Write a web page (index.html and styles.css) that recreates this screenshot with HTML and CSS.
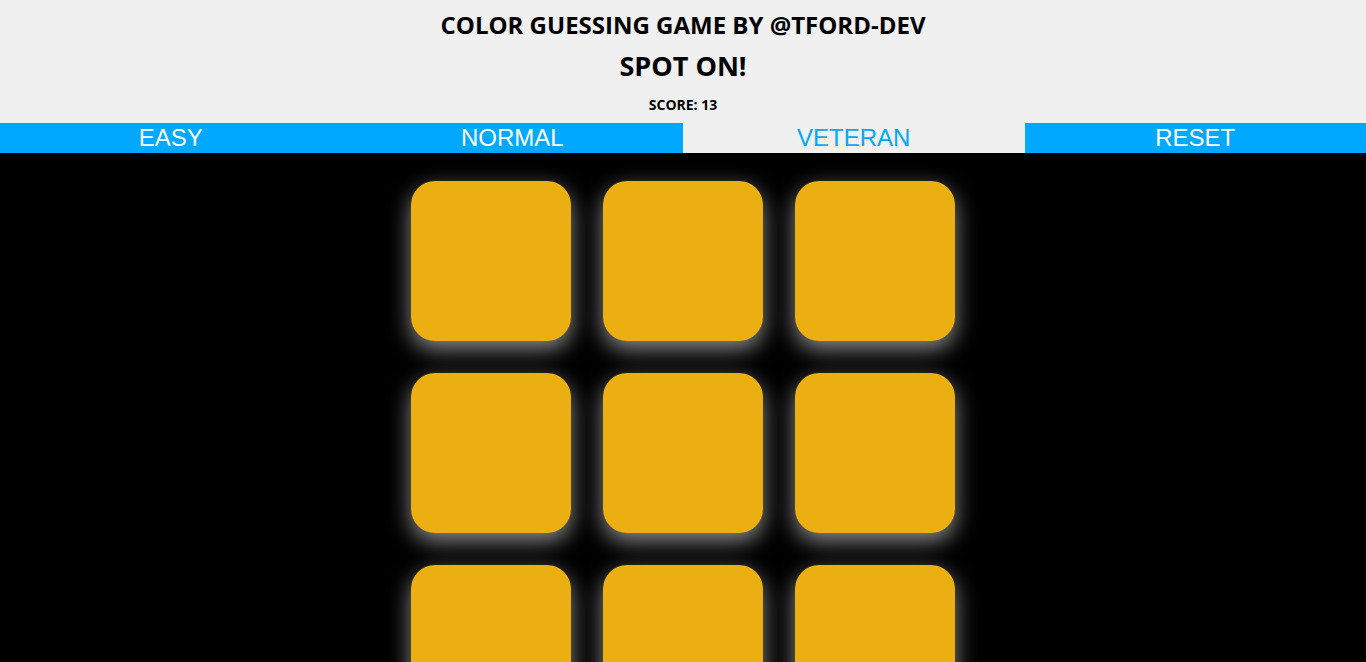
FILE: index.html
```html
<!DOCTYPE html>
<html lang="en">
  <head>
    <meta charset="UTF-8" />
    <meta name="viewport" content="width=device-width, initial-scale=1.0" />
    <title>Color Guessing Game</title>
    <link rel="stylesheet" href="styles.css">
  </head>
  <body>
    <div class="header">
      <h1 class="title">COLOR GUESSING GAME BY @TFORD-DEV</h1>
      <h2 class="message">SPOT ON!</h2>
      <p class="score">SCORE: 13</p>
    </div>
    <div class="nav">
      <button class="mode">EASY</button>
      <button class="mode">NORMAL</button>
      <button class="mode selected">VETERAN</button>
      <button class="mode">RESET</button>
    </div>
    <div class="board">
      <div class="grid">
        <div class="square"></div>
        <div class="square"></div>
        <div class="square"></div>
        <div class="square"></div>
        <div class="square"></div>
        <div class="square"></div>
        <div class="square"></div>
        <div class="square"></div>
        <div class="square"></div>
      </div>
    </div>
  </body>
</html>
```

FILE: styles.css
```css
* {
  margin: 0;
  padding: 0;
  box-sizing: border-box;
}
html,
body {
  height: 100%;
}
body {
  background-color: #000;
  font-family: "Open Sans", "Noto Sans", sans-serif;
  overflow: hidden;
}
.header {
  background-color: #f0f0f0;
  text-align: center;
  color: #000;
  height: 123px;
  padding-top: 9px;
}
.title {
  font-size: 24px;
  font-weight: 700;
  line-height: 32px;
}
.message {
  font-size: 27px;
  font-weight: 700;
  line-height: 36px;
  margin-top: 7px;
}
.score {
  font-size: 14px;
  font-weight: 700;
  line-height: 18px;
  margin-top: 12px;
}
.nav {
  display: flex;
  height: 30px;
}
.mode {
  flex: 1;
  border: none;
  outline: none;
  background-color: #00a8ff;
  color: #fff;
  font-family: "Liberation Sans", Arial, sans-serif;
  font-size: 24px;
  line-height: 30px;
}
.mode.selected {
  background-color: #f0f0f0;
  color: #00a8ff;
}
.board {
  padding-top: 28px;
}
.grid {
  display: grid;
  grid-template-columns: repeat(3, 160px);
  gap: 32px;
  justify-content: center;
}
.square {
  width: 160px;
  height: 160px;
  border-radius: 24px;
  background-color: #ecaf12;
  box-shadow: 0 8px 22px rgba(255, 255, 255, 0.55);
}
```
